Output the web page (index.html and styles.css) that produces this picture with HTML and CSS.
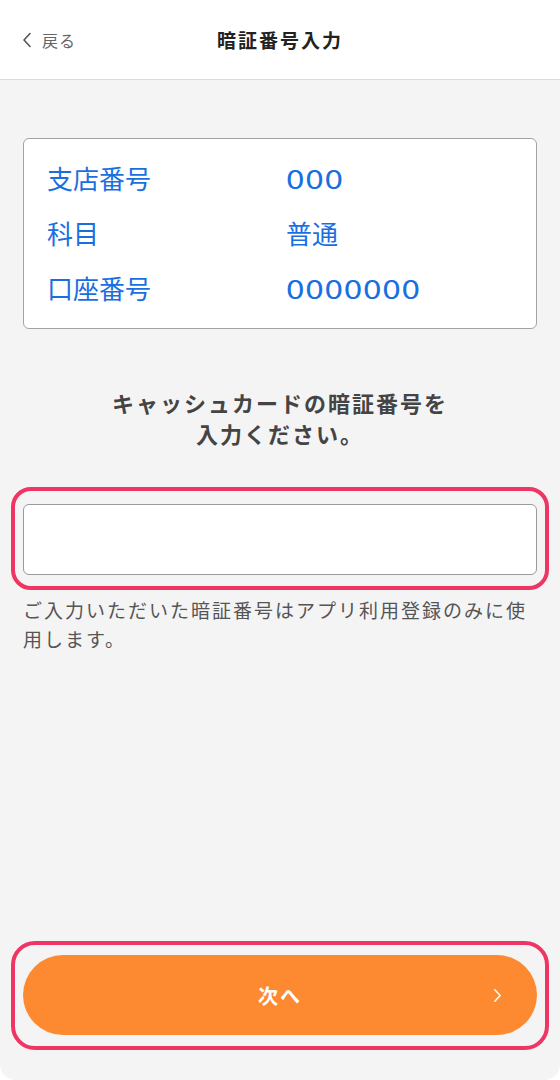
FILE: index.html
```html
<!DOCTYPE html>
<html lang="ja">
<head>
<meta charset="utf-8">
<title>暗証番号入力</title>
<link rel="stylesheet" href="styles.css">
</head>
<body>
<div class="screen">
  <header class="header">
    <a class="back" href="#">
      <svg class="back-icon" viewBox="0 0 10 16" width="10" height="16"><path d="M8 1.5 L2 8 L8 14.5" fill="none" stroke="#555" stroke-width="1.6" stroke-linecap="round" stroke-linejoin="round"/></svg>
      <span>戻る</span>
    </a>
    <h1 class="title">暗証番号入力</h1>
    <span class="spacer"></span>
  </header>
  <main class="main">
    <div class="card">
      <div class="row"><span class="label">支店番号</span><span class="value"><span class="num">000</span></span></div>
      <div class="row"><span class="label">科目</span><span class="value">普通</span></div>
      <div class="row"><span class="label">口座番号</span><span class="value"><span class="num">0000000</span></span></div>
    </div>
    <p class="lead">キャッシュカードの暗証番号を<br>入力ください。</p>
    <div class="highlight field-wrap">
      <input class="pin" type="password" inputmode="numeric" aria-label="暗証番号">
    </div>
    <p class="note">ご入力いただいた暗証番号はアプリ利用登録のみに使用します。</p>
  </main>
  <footer class="footer">
    <div class="highlight btn-wrap">
      <button class="next" type="button">
        <span>次へ</span>
        <svg class="next-icon" viewBox="0 0 10 16" width="9" height="15"><path d="M2 1.5 L8 8 L2 14.5" fill="none" stroke="#fff" stroke-width="1.6" stroke-linecap="round" stroke-linejoin="round"/></svg>
      </button>
    </div>
  </footer>
</div>
</body>
</html>
```
FILE: styles.css
```css
* { box-sizing: border-box; }
html, body { margin: 0; padding: 0; background: #ffffff; }
body {
  font-family: "Noto Sans CJK JP", "Noto Sans", sans-serif;
  color: #333;
}
.screen {
  height: 1080px;
  background: #f4f4f4;
  border-radius: 0 0 16px 16px;
  display: flex;
  flex-direction: column;
  overflow: hidden;
}
.header {
  height: 80px;
  flex: none;
  background: #ffffff;
  border-bottom: 1px solid #dcdcdc;
  display: grid;
  grid-template-columns: 1fr auto 1fr;
  align-items: center;
  padding: 0 22px;
}
.back {
  display: flex;
  align-items: center;
  gap: 10px;
  color: #666;
  text-decoration: none;
  font-size: 16px;
  letter-spacing: 1px;
}
.back-icon { display: block; }
.title {
  margin: 0;
  font-size: 19px;
  font-weight: 700;
  letter-spacing: 2px;
  color: #222;
}
.main {
  flex: 1;
  padding: 58px 23px 0;
  display: flex;
  flex-direction: column;
}
.card {
  background: #ffffff;
  border: 1px solid #a3a3a3;
  border-radius: 6px;
  padding: 11px 0 13px 23px;
}
.row {
  display: grid;
  grid-template-columns: 239px 1fr;
  line-height: 55px;
  font-size: 26px;
  color: #1a6fe0;
}
.num {
  display: inline-block;
  letter-spacing: 0.6px;
  transform: scaleX(1.28);
  transform-origin: left center;
}
.lead {
  margin: 58px 0 0;
  text-align: center;
  font-size: 22px;
  letter-spacing: 2px;
  line-height: 31px;
  font-weight: 700;
  color: #444;
}
.highlight {
  border: 4px solid #ef3563;
  border-radius: 20px;
  margin-left: -12px;
  margin-right: -12px;
}
.field-wrap {
  margin-top: 38px;
  padding: 13px 8px 11px;
}
.pin {
  display: block;
  width: 100%;
  height: 71px;
  border: 1px solid #9a9a9a;
  border-radius: 6px;
  background: #ffffff;
  font-size: 24px;
  padding: 0 14px;
  outline: none;
}
.note {
  margin: 5px 0 0;
  font-size: 19px;
  letter-spacing: 2px;
  line-height: 29px;
  color: #555;
}
.footer {
  flex: none;
  padding: 0 23px 30px;
}
.btn-wrap {
  padding: 10px 8px 11px;
  border-radius: 24px;
}
.next {
  position: relative;
  display: flex;
  align-items: center;
  justify-content: center;
  width: 100%;
  height: 80px;
  border: none;
  border-radius: 40px;
  background: #fd8a30;
  color: #ffffff;
  font-family: inherit;
  font-size: 20px;
  font-weight: 700;
  letter-spacing: 2px;
  cursor: pointer;
}
.next-icon {
  position: absolute;
  right: 35px;
  top: 33px;
}
```
